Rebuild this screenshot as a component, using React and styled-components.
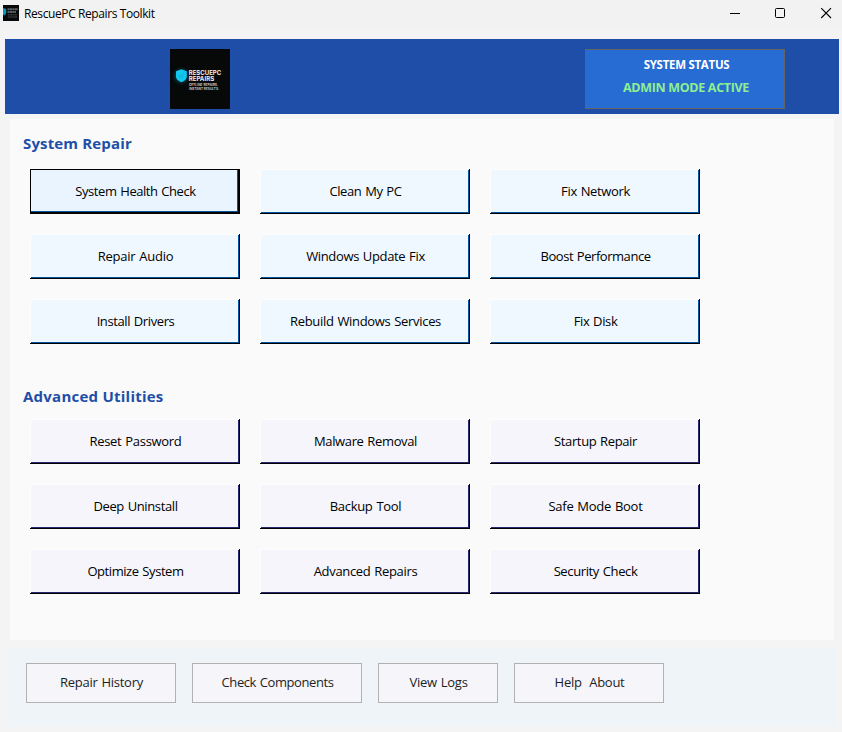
import React from "react";
import styled, { createGlobalStyle, css } from "styled-components";

const GlobalStyle = createGlobalStyle`
  *, *::before, *::after { box-sizing: border-box; }
  body {
    margin: 0;
    background: #f4f4f4;
    font-family: "Open Sans", "Noto Sans", sans-serif;
    color: #000;
  }
  button { font: inherit; color: inherit; padding: 0; margin: 0; }
`;

const Window = styled.div`
  width: 842px;
  height: 732px;
  overflow: hidden;
  display: flex;
  flex-direction: column;
  background: #f4f4f4;
`;

const TitleBar = styled.div`
  height: 29px;
  flex: none;
  display: flex;
  align-items: flex-start;
  background: #f2f2f2;
  padding: 5px 10px 0 3px;
`;

const AppIcon = styled.svg`
  width: 16px;
  height: 16px;
  flex: none;
`;

const WindowTitle = styled.div`
  margin-left: 5px;
  flex: 1;
  font-size: 12px;
  line-height: 17px;
  letter-spacing: ${(p) => p.$track}px;
  white-space: pre;
`;

const WindowControls = styled.svg`
  width: 102px;
  height: 16px;
  flex: none;
`;

const Header = styled.header`
  height: 75px;
  flex: none;
  margin: 10px 3px 0 5px;
  padding: 10px 54px 0 165px;
  display: flex;
  justify-content: space-between;
  align-items: flex-start;
  background: #1f4ea8;
`;

const Logo = styled.svg`
  width: 60px;
  height: 60px;
  flex: none;
`;

const StatusBox = styled.div`
  width: 200px;
  height: 60px;
  border: 1px solid #646464;
  background: #276cd2;
  display: flex;
  flex-direction: column;
  align-items: center;
  font-weight: 700;
  white-space: pre;
`;

const StatusLabel = styled.div`
  margin-top: 6px;
  padding-left: 3px;
  font-size: 11.5px;
  line-height: 18px;
  color: #fff;
  letter-spacing: ${(p) => p.$track}px;
`;

const StatusValue = styled.div`
  margin-top: 4px;
  padding-left: 2px;
  font-size: 12.5px;
  line-height: 20px;
  color: #90ee90;
  letter-spacing: ${(p) => p.$track}px;
`;

const Content = styled.main`
  height: 521px;
  flex: none;
  margin: 5px 8px 0 10px;
  background: #fafafa;
  display: flex;
  flex-direction: column;
`;

const SectionTitle = styled.h2`
  margin: ${(p) => p.$top}px 0 ${(p) => p.$bottom}px 13px;
  height: 24px;
  font-size: 15px;
  line-height: 24px;
  font-weight: 700;
  color: #1f4ea8;
  letter-spacing: ${(p) => p.$track}px;
  white-space: pre;
`;

const ToolGrid = styled.div`
  margin-left: 20px;
  display: grid;
  grid-template-columns: repeat(3, 210px);
  grid-auto-rows: 45px;
  gap: 20px;
`;

const tones = {
  repair: { fill: "#f0f8ff", edge: "#0054a0" },
  utility: { fill: "#f5f5fb", edge: "#28286e" },
};

const ToolButton = styled.button`
  display: flex;
  align-items: center;
  justify-content: center;
  border: 0;
  padding: 0 0 2px 1px;
  font-size: 13px;
  line-height: 18px;
  letter-spacing: ${(p) => p.$track}px;
  word-spacing: 0.8px;
  white-space: pre;
  background: ${(p) => tones[p.$tone].fill};
  box-shadow: inset -1px -1px 0 #000, inset 1px 1px 0 #fdfdfd,
    inset -2px -2px 0 ${(p) => tones[p.$tone].edge};
  ${(p) =>
    p.$focused &&
    css`
      background: #eaf4ff;
      box-shadow: inset 0 0 0 1px #000, inset -2px -2px 0 #000,
        inset -3px -3px 0 ${tones[p.$tone].edge};
    `}
`;

const Footer = styled.footer`
  height: 79px;
  flex: none;
  margin: 8px 6px 0 8px;
  padding: 15px 18px;
  display: flex;
  align-items: flex-start;
  gap: 16px;
  background: #eff4f8;
`;

const FooterButton = styled.button`
  width: ${(p) => p.$width}px;
  height: 40px;
  padding: 0 0 2px 1px;
  border: 1px solid #b2b2b2;
  background: #f5f5fa;
  font-size: 13px;
  line-height: 18px;
  color: #1e1e1e;
  letter-spacing: ${(p) => p.$track}px;
  word-spacing: 0.8px;
  white-space: pre;
`;

const repairs = [
  ["System Health Check", -0.44], ["Clean My PC", -0.4], ["Fix Network", -0.36],
  ["Repair Audio", -0.25], ["Windows Update Fix", -0.35], ["Boost Performance", -0.45],
  ["Install Drivers", -0.4], ["Rebuild Windows Services", -0.32], ["Fix Disk", -0.38],
];

const utilities = [
  ["Reset Password", -0.3], ["Malware Removal", -0.36], ["Startup Repair", -0.38],
  ["Deep Uninstall", -0.38], ["Backup Tool", -0.3], ["Safe Mode Boot", -0.27],
  ["Optimize System", -0.43], ["Advanced Repairs", -0.33], ["Security Check", -0.38],
];

const footerItems = [
  ["Repair History", 150, -0.27],
  ["Check Components", 170, -0.42],
  ["View Logs", 120, -0.25],
  ["Help  About", 150, -0.3],
];

function BrandArt() {
  return (
    <>
      <defs>
        <radialGradient id="glow">
          <stop offset="0.3" stopColor="#00b8e0" stopOpacity="0.5" />
          <stop offset="0.7" stopColor="#00b8e0" stopOpacity="0.15" />
          <stop offset="1" stopColor="#00b8e0" stopOpacity="0" />
        </radialGradient>
      </defs>
      <rect width="60" height="60" fill="#070808" />
      <circle cx="11.4" cy="27" r="9.5" fill="url(#glow)" />
      <path d="M11.4 20.2 L16.8 22.2 V27 C16.8 30.4 14.2 32 11.4 33.2 C8.6 32 6 30.4 6 27 V22.2 Z" fill="#12c6ee" />
      <path d="M8.8 28.5 L13.6 24 M9.3 25.5 L11.2 29.5 L14 26" fill="none" stroke="#079bc4" strokeWidth="0.6" opacity="0.7" />
      <g fill="#f1f1f1" fontFamily="Inter, sans-serif" fontWeight="700">
        <text x="18.7" y="26" fontSize="5.8" textLength="32.5" lengthAdjust="spacingAndGlyphs">RESCUEPC</text>
        <text x="18.7" y="32.1" fontSize="5.8" textLength="25.5" lengthAdjust="spacingAndGlyphs">REPAIRS</text>
        <g fill="#d8d8d8" fontWeight="600">
          <text x="19" y="36.6" fontSize="3.3" textLength="29" lengthAdjust="spacingAndGlyphs">OFFLINE REPAIRS.</text>
          <text x="19" y="40.5" fontSize="3.3" textLength="30" lengthAdjust="spacingAndGlyphs">INSTANT RESULTS.</text>
        </g>
      </g>
    </>
  );
}

function SmallMark() {
  return (
    <AppIcon viewBox="0 0 16 16" aria-hidden="true">
      <rect width="16" height="16" fill="#08090a" />
      <path d="M0 3 L3.2 4 V7.5 Q3 9.5 1.5 10.5 L0 9.5 Z" fill="#0798bd" />
      <path d="M4.5 4.2h10.5M4.5 7h8.5" stroke="#5c6265" strokeWidth="2" strokeDasharray="2.2 .3" />
      <path d="M4.8 9.8h9M4.8 12h9.4" stroke="#34393b" strokeWidth="1.6" strokeDasharray="2 .4" />
    </AppIcon>
  );
}

export default function App() {
  return (
    <Window>
      <GlobalStyle />
      <TitleBar>
        <SmallMark />
        <WindowTitle $track={-0.4}>RescuePC Repairs Toolkit</WindowTitle>
        <WindowControls viewBox="0 0 102 16" fill="none" stroke="#000" aria-hidden="true">
          <path d="M0 8.5h10" />
          <rect x="45.5" y="3.5" width="9" height="9" rx="1" />
          <path d="M91.2 3.2l9.8 9.8M101 3.2l-9.8 9.8" strokeWidth="1.1" />
        </WindowControls>
      </TitleBar>
      <Header>
        <Logo viewBox="0 0 60 60" role="img" aria-label="RescuePC Repairs"><BrandArt /></Logo>
        <StatusBox>
          <StatusLabel $track={-0.28}>SYSTEM STATUS</StatusLabel>
          <StatusValue $track={-0.32}>ADMIN MODE ACTIVE</StatusValue>
        </StatusBox>
      </Header>
      <Content>
        <SectionTitle $top={12} $bottom={14} $track={0.15}>System Repair</SectionTitle>
        <ToolGrid>
          {repairs.map(([label, track], i) => (
            <ToolButton key={label} $tone="repair" $focused={i === 0} $track={track}>{label}</ToolButton>
          ))}
        </ToolGrid>
        <SectionTitle $top={40} $bottom={11} $track={0.24}>Advanced Utilities</SectionTitle>
        <ToolGrid>
          {utilities.map(([label, track]) => (
            <ToolButton key={label} $tone="utility" $track={track}>{label}</ToolButton>
          ))}
        </ToolGrid>
      </Content>
      <Footer>
        {footerItems.map(([label, width, track]) => (
          <FooterButton key={label} $width={width} $track={track}>{label}</FooterButton>
        ))}
      </Footer>
    </Window>
  );
}
